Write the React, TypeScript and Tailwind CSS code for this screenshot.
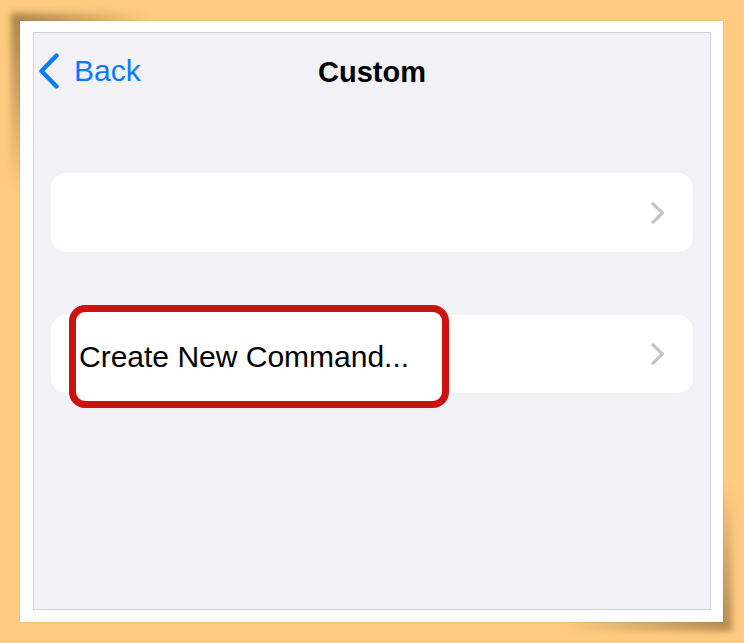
import React from "react";

function BackChevron() {
  return (
    <svg width="22" height="36" viewBox="0 0 22 36" fill="none">
      <path d="M18.5 2.5 L3.5 18 L18.5 33.5" stroke="#0A7AFF" strokeWidth="4.4" strokeLinecap="round" strokeLinejoin="round" />
    </svg>
  );
}

function RowChevron() {
  return (
    <svg width="14" height="22" viewBox="0 0 14 22" fill="none">
      <path d="M2 1.8 L11.5 11 L2 20.2" stroke="#C4C4C7" strokeWidth="3.2" strokeLinecap="round" strokeLinejoin="round" />
    </svg>
  );
}

export default function App() {
  const font = { fontFamily: '"Liberation Sans", Arial, sans-serif' };
  return (
    <div className="isolate relative w-[744px] h-[643px] bg-[#FECB81] pt-[21px] pl-[20px]" style={font}>
      <div className="relative w-[703px] h-[601px] bg-white pt-[11px] pl-[13px] shadow-[0_0_1px_rgba(0,0,0,0.35)]">
        <div className="absolute -z-10 left-[-9px] top-[-8px] w-[140px] h-[180px] blur-[3px] bg-[radial-gradient(ellipse_at_top_left,rgba(90,60,20,0.5),rgba(90,60,20,0)_70%)]" />
        <div className="absolute -z-10 right-[-9px] bottom-[-9px] w-[170px] h-[150px] blur-[3px] bg-[radial-gradient(ellipse_at_bottom_right,rgba(90,60,20,0.45),rgba(90,60,20,0)_70%)]" />
        <div className="w-[678px] h-[578px] border border-[#D2D2D6] bg-[#F1F1F6] flex flex-col">
          <div className="mt-[20px] h-[36px] grid grid-cols-[1fr_auto_1fr] items-start">
            <div className="flex items-center pl-[4px] h-[36px] gap-[14px] text-[#0A7AFF] text-[30px] leading-[36px]">
              <BackChevron />
              <span>Back</span>
            </div>
            <div className="text-[29px] leading-[36px] font-bold text-black pt-[1px]">Custom</div>
            <div />
          </div>
          <div className="px-[17px] mt-[84px] flex flex-col gap-[63px]">
            <div className="h-[79px] bg-white rounded-[15px] flex items-center justify-end pr-[28px]">
              <RowChevron />
            </div>
            <div className="relative h-[78px] bg-white rounded-[15px] flex items-center justify-end pr-[28px]">
              <RowChevron />
              <div className="absolute left-[18px] top-[-10px] w-[380px] h-[103px] border-[7px] border-[#CC1111] rounded-[16px] bg-white flex items-center pl-[3px]">
                <span className="text-[30px] leading-[36px] text-black">Create New Command...</span>
              </div>
            </div>
          </div>
        </div>
      </div>
    </div>
  );
}
